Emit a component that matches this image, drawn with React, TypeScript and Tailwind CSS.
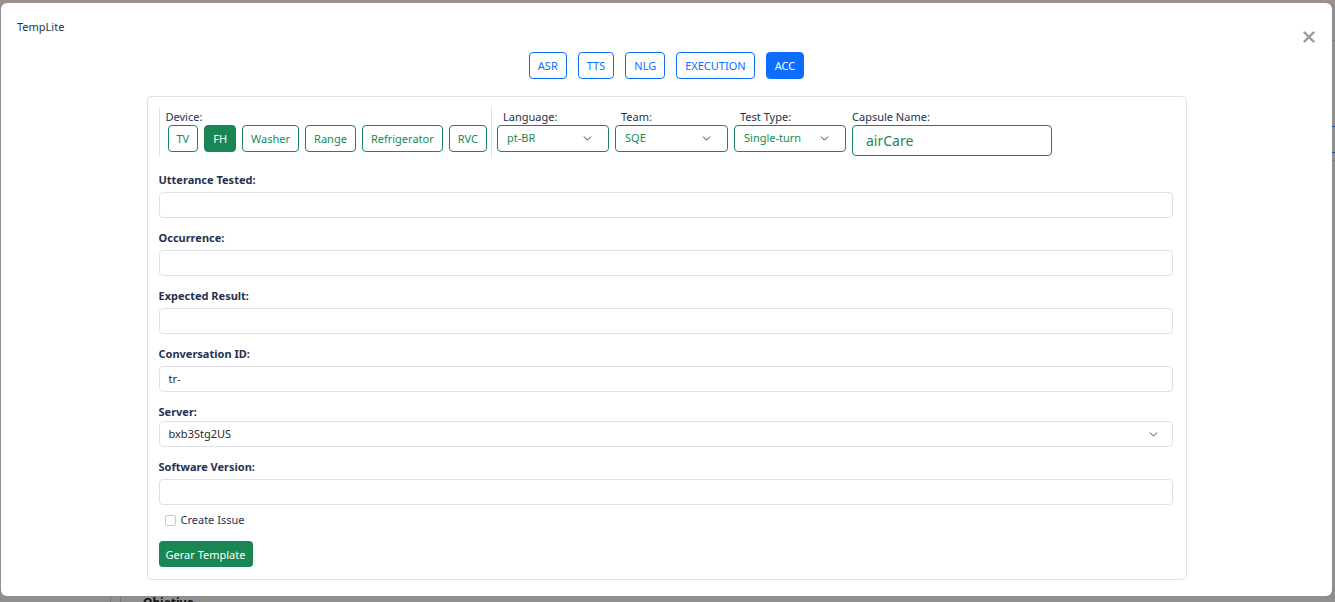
import { ChevronDown } from "lucide-react";

const font = { fontFamily: '"Noto Sans", "Open Sans", sans-serif' };

const tabs = ["ASR", "TTS", "NLG", "EXECUTION", "ACC"];
const devices = ["TV", "FH", "Washer", "Range", "Refrigerator", "RVC"];

function GreenSelect({ label, value, width }: { label: string; value: string; width: string }) {
    return (
        <div className="flex flex-col">
            <span className="ml-[6px] h-[14px] text-[11px] leading-[14px] text-[#25324d]">{label}</span>
            <div className={`mt-[1px] flex h-[27px] ${width} items-center justify-between rounded-[4px] border border-[#198754] pl-[9px] pr-[14px] text-[11px] text-[#198754]`}>
                <span>{value}</span>
                <ChevronDown className="h-[13px] w-[13px] text-[#333]" strokeWidth={1.8} />
            </div>
        </div>
    );
}

function Field({ label, value, select, gap = "mt-[5px]" }: { label: string; value?: string; select?: boolean; gap?: string }) {
    return (
        <div className="mb-[13px] flex flex-col">
            <label className="h-[14px] text-[11px] font-bold leading-[14px] text-[#25324d]">{label}</label>
            <div className={`${gap} flex h-[26px] items-center justify-between rounded-[4px] border border-[#dee2e6] pl-[9px] pr-[12px] text-[11px] text-[#2b2b2b]`}>
                <span>{value}</span>
                {select && <ChevronDown className="h-[13px] w-[13px] text-[#444]" strokeWidth={1.8} />}
            </div>
        </div>
    );
}

export default function App() {
    return (
        <div className="relative h-[602px] w-[1335px] overflow-hidden bg-[#8f8f8f]" style={font}>
            {/* dimmed page behind the modal */}
            <div className="absolute inset-x-0 top-0 h-[3px] bg-[#9c928d]" />
            <div className="absolute right-0 top-[40px] h-[1px] w-[3px] bg-[#7d7d7d]" />
            <div className="absolute right-0 top-[126px] h-[1px] w-[3px] bg-[#2250a8]" />
            <div className="absolute right-0 top-[152px] h-[1px] w-[3px] bg-[#2250a8]" />
            <div className="absolute right-0 top-[160px] h-[1px] w-[3px] bg-[#7d7d7d]" />
            <div className="absolute bottom-0 left-[110px] h-[6px] w-[1px] bg-[#777]" />
            <div className="absolute bottom-0 left-[120px] h-[6px] w-[1px] bg-[#777]" />
            <div className="absolute left-[143px] top-[596px] text-[12px] font-bold leading-[14px] text-[#111]">Objetivo</div>

            {/* Modal */}
            <div className="absolute left-[1px] top-[3px] flex h-[593px] w-[1331px] flex-col rounded-[6px] bg-white">
                {/* Header */}
                <div className="relative h-[49px]">
                    <span className="absolute left-[16px] top-[17px] text-[11px] leading-[14px] text-[#25324d]">TempLite</span>
                    <button className="absolute right-[17px] top-[28px] text-[#9a9a9a]">
                        <svg width="12" height="12" viewBox="0 0 12 12">
                            <path d="M1.5 1.5 L10.5 10.5 M10.5 1.5 L1.5 10.5" stroke="currentColor" strokeWidth="2.4" strokeLinecap="round" />
                        </svg>
                    </button>
                </div>

                {/* Tabs */}
                <div className="flex justify-center gap-[11px]">
                    {tabs.map((t) => (
                        <button
                            key={t}
                            className={`h-[27px] rounded-[4px] border border-[#0d6efd] px-[8px] text-[11px] leading-none ${t === "ACC" ? "bg-[#0d6efd] text-white" : "bg-white text-[#0d6efd]"}`}
                        >
                            {t}
                        </button>
                    ))}
                </div>

                {/* Form card */}
                <div className="mx-auto mt-[17px] flex w-[1040px] flex-col rounded-[4px] border border-[#dee2e6] pb-[12px] pl-[11px] pr-[13px] pt-[10px]">
                    {/* Top row */}
                    <div className="flex h-[50px] items-start">
                        <div className="flex h-[50px] flex-col border-l border-[#dee2e6] pl-[6px] pr-[4px] pt-[3px]">
                            <span className="h-[14px] text-[11px] leading-[14px] text-[#25324d]">Device:</span>
                            <div className="ml-[2px] mt-[1px] flex gap-[6px]">
                                {devices.map((d) => (
                                    <button
                                        key={d}
                                        className={`h-[27px] rounded-[4px] border border-[#198754] px-[8px] text-[11px] leading-none ${d === "FH" ? "bg-[#198754] text-white" : "bg-white text-[#198754]"}`}
                                    >
                                        {d}
                                    </button>
                                ))}
                            </div>
                        </div>
                        <div className="flex h-[50px] gap-[6px] border-l border-[#dee2e6] pl-[5px] pt-[3px]">
                            <GreenSelect label="Language:" value="pt-BR" width="w-[112px]" />
                            <GreenSelect label="Team:" value="SQE" width="w-[113px]" />
                            <GreenSelect label="Test Type:" value="Single-turn" width="w-[112px]" />
                            <div className="flex flex-col">
                                <span className="h-[14px] text-[11px] leading-[14px] text-[#25324d]">Capsule Name:</span>
                                <div className="mt-[1px] flex h-[31px] w-[200px] items-center rounded-[4px] border border-[#198754] pl-[13px] text-[14px] text-[#198754]">
                                    airCare
                                </div>
                            </div>
                        </div>
                    </div>

                    <div className="mt-[16px] flex flex-col">
                        <Field label="Utterance Tested:" />
                        <Field label="Occurrence:" />
                        <Field label="Expected Result:" />
                        <Field label="Conversation ID:" value="tr-" />
                        <Field label="Server:" value="bxb3Stg2US" select gap="mt-[2px]" />
                        <Field label="Software Version:" />
                    </div>

                    <div className="-mt-[5px] flex h-[14px] items-center gap-[5px] pl-[6px]">
                        <span className="h-[11px] w-[11px] rounded-[2px] border border-[#c8c8c8]" />
                        <span className="text-[11px] leading-[14px] text-[#25324d]">Create Issue</span>
                    </div>

                    <button className="mt-[14px] h-[26px] w-[94px] rounded-[4px] bg-[#198754] text-[11px] leading-none text-white">
                        Gerar Template
                    </button>
                </div>
            </div>
        </div>
    );
}
